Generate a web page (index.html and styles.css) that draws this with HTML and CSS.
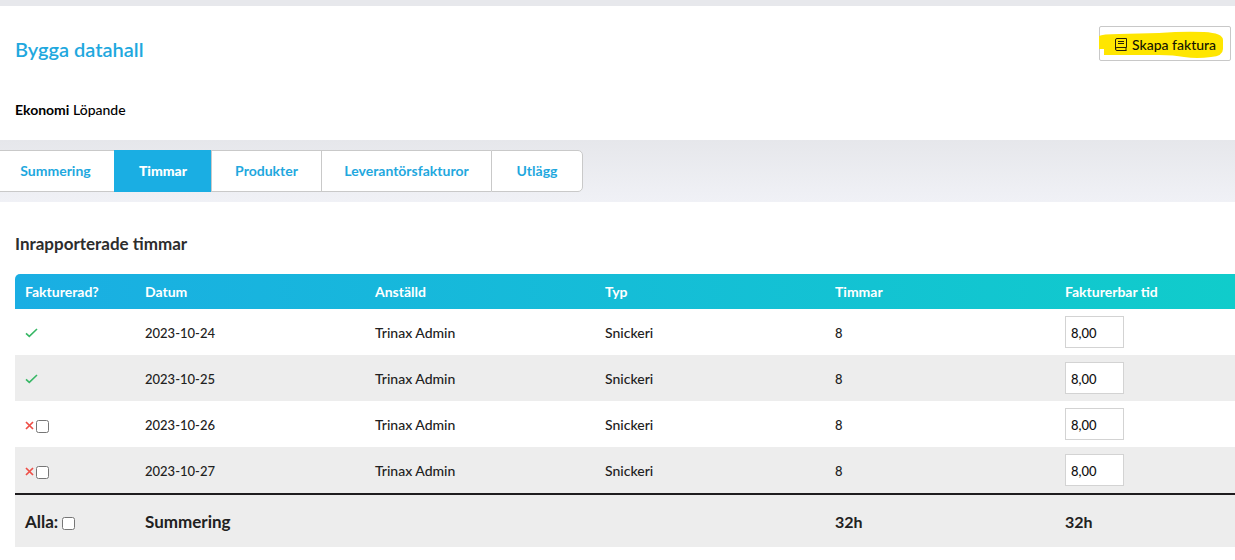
FILE: index.html
```html
<!DOCTYPE html>
<html lang="sv">
<head>
<meta charset="utf-8">
<meta name="viewport" content="width=device-width, initial-scale=1">
<title>Bygga datahall</title>
<link rel="stylesheet" href="styles.css">
</head>
<body>
<svg class="sprite" aria-hidden="true">
  <symbol id="check" viewBox="0 0 13 10"><path d="M1 5.300 4.300 8.300 12 1" fill="none" stroke="#37b765" stroke-width="1.600"/></symbol>
  <symbol id="cross" viewBox="0 0 9 9"><path d="M1 1 8 8M8 1 1 8" fill="none" stroke="#ee4f47" stroke-width="1.700"/></symbol>
</svg>
<header class="project">
  <div class="project-top">
    <h1 class="project-title">Bygga datahall</h1>
    <button class="create" type="button">
      <svg class="marker" viewBox="0 0 132 35" preserveAspectRatio="none" aria-hidden="true"><path d="M0 10 Q3 8 20 8 L60 7 Q85 5 105 6 Q124 7 124 14 V23 Q124 30 112 31 Q98 33 85 31 Q75 29 60 29 H5 V23 H0Z" fill="#ffe600"/></svg>
      <svg class="book" viewBox="0 0 12 13" aria-hidden="true"><path d="M11.500 9.500V.500H2Q.500.500.500 2V11Q.500 12.500 2 12.500H11.500M11.500 9.500H2Q.500 9.500.500 11M11 9.500V12.500" fill="none" stroke="#28200a"/><path d="M3 3.500H9M3 5.500H9" stroke="#28200a"/></svg>
      <span class="create-label">Skapa faktura</span>
    </button>
  </div>
  <p class="economy"><strong>Ekonomi</strong> Löpande</p>
</header>
<nav class="tabs">
  <a class="tab" href="#summering">Summering</a>
  <a class="tab active" href="#timmar" aria-current="page">Timmar</a>
  <a class="tab" href="#produkter">Produkter</a>
  <a class="tab" href="#leverantorsfakturor">Leverantörsfakturor</a>
  <a class="tab" href="#utlagg">Utlägg</a>
</nav>
<main class="panel">
  <h2 class="panel-title">Inrapporterade timmar</h2>
  <table class="hours">
    <colgroup><col class="col-status"><col class="col-data"><col class="col-data"><col class="col-data"><col class="col-data"><col></colgroup>
    <thead>
      <tr><th>Fakturerad?</th><th>Datum</th><th>Anställd</th><th>Typ</th><th>Timmar</th><th>Fakturerbar tid</th></tr>
    </thead>
    <tbody>
      <tr><td><svg class="check" role="img" aria-label="Ja"><use href="#check"/></svg></td><td class="num">2023-10-24</td><td>Trinax Admin</td><td>Snickeri</td><td class="num">8</td><td><input class="time" type="text" value="8,00" aria-label="Fakturerbar tid 2023-10-24"></td></tr>
      <tr><td><svg class="check" role="img" aria-label="Ja"><use href="#check"/></svg></td><td class="num">2023-10-25</td><td>Trinax Admin</td><td>Snickeri</td><td class="num">8</td><td><input class="time" type="text" value="8,00" aria-label="Fakturerbar tid 2023-10-25"></td></tr>
      <tr><td><span class="status"><svg class="cross" role="img" aria-label="Nej"><use href="#cross"/></svg><input class="box" type="checkbox" aria-label="Välj 2023-10-26"></span></td><td class="num">2023-10-26</td><td>Trinax Admin</td><td>Snickeri</td><td class="num">8</td><td><input class="time" type="text" value="8,00" aria-label="Fakturerbar tid 2023-10-26"></td></tr>
      <tr><td><span class="status"><svg class="cross" role="img" aria-label="Nej"><use href="#cross"/></svg><input class="box" type="checkbox" aria-label="Välj 2023-10-27"></span></td><td class="num">2023-10-27</td><td>Trinax Admin</td><td>Snickeri</td><td class="num">8</td><td><input class="time" type="text" value="8,00" aria-label="Fakturerbar tid 2023-10-27"></td></tr>
    </tbody>
    <tfoot>
      <tr><td><label class="all">Alla: <input class="box" type="checkbox"></label></td><td>Summering</td><td></td><td></td><td class="sum">32h</td><td class="sum">32h</td></tr>
    </tfoot>
  </table>
</main>
</body>
</html>
```
FILE: styles.css
```css
* { box-sizing: border-box; }
body {
  margin: 0;
  padding-top: 6px;
  background: #e7e8ec;
  color: #212121;
  font-family: Lato, "Open Sans", sans-serif;
  font-size: 14px;
  font-weight: 500;
  line-height: 20px;
}
.sprite { position: absolute; width: 0; height: 0; }
.project {
  background: #fff;
  padding: 20px 4px 20px 15px;
  color: #000;
}
.project-top {
  display: flex;
  justify-content: space-between;
  align-items: flex-start;
}
.project-title {
  margin: 11px 0 0;
  color: #1fa8de;
  font-size: 20px;
  font-weight: 600;
  line-height: 24px;
}
.create {
  position: relative;
  display: flex;
  align-items: center;
  justify-content: center;
  gap: 5px;
  width: 132px;
  height: 35px;
  padding: 2px 0 0 1px;
  background: #fff;
  border: 1px solid #c8c8c8;
  border-radius: 2px;
  color: #151500;
  font: inherit;
}
.marker {
  position: absolute;
  inset: -1px;
  width: 132px;
  height: 35px;
}
.book { position: relative; width: 12px; height: 13px; }
.create-label { position: relative; }
.economy { margin: 39px 0 0; }
.economy strong { font-weight: 700; }
.tabs {
  display: grid;
  grid-template-columns: 114px 97px 110px 170px 92px;
  padding: 10px 0;
  background: linear-gradient(#e6e7eb, #f0f1f6);
}
.tab {
  height: 42px;
  background: #fff;
  border: 1px solid #c9c9c9;
  border-right-width: 0;
  color: #1fa8de;
  font-weight: 700;
  line-height: 40px;
  text-align: center;
  text-decoration: none;
}
.tab:first-child { border-left: 0; padding-right: 3px; }
.tab:last-child { border-right-width: 1px; border-radius: 0 5px 5px 0; }
.tab.active { background: #1aaee3; border-color: #1aaee3; color: #fff; font-weight: 900; }
.panel { background: #fff; padding: 32px 0 20px 15px; }
.panel-title {
  margin: 0 0 20px;
  color: #2d2d2d;
  font-size: 17px;
  font-weight: 700;
  line-height: 20px;
}
.hours {
  width: 100%;
  table-layout: fixed;
  border-collapse: separate;
  border-spacing: 0;
}
.col-status { width: 120px; }
.col-data { width: 230px; }
.hours th, .hours td { padding: 0 10px; text-align: left; }
.hours thead { clip-path: inset(0 round 5px 0 0 0); }
.hours thead tr { background: linear-gradient(90deg, #1aaee3, #10cccb); }
.hours th { height: 35px; padding-top: 1px; color: #fff; font-weight: 700; }
.hours tbody td { height: 46px; padding-top: 2px; }
.hours tbody td:last-child { padding-top: 0; }
.hours tbody .num { font-size: 13px; }
.hours tbody tr:nth-child(even), .hours tfoot tr { background: #ededed; }
.hours tfoot td {
  height: 54px;
  padding-top: 2px;
  border-top: 2px solid #1e1c1e;
  font-size: 17px;
  font-weight: 700;
}
.hours tfoot .sum { font-size: 16px; }
.check { display: block; width: 13px; height: 10px; }
.cross { width: 9px; height: 9px; }
.status { display: flex; align-items: center; gap: 2px; }
.box { width: 13px; height: 13px; margin: 2px 0 0; }
.all { display: flex; align-items: center; gap: 4px; }
.time {
  display: block;
  width: 59px;
  height: 32px;
  padding: 2px 5px 0;
  border: 1px solid #d3d3d3;
  background: #fff;
  color: #111;
  font: inherit;
  font-size: 13px;
}
```
